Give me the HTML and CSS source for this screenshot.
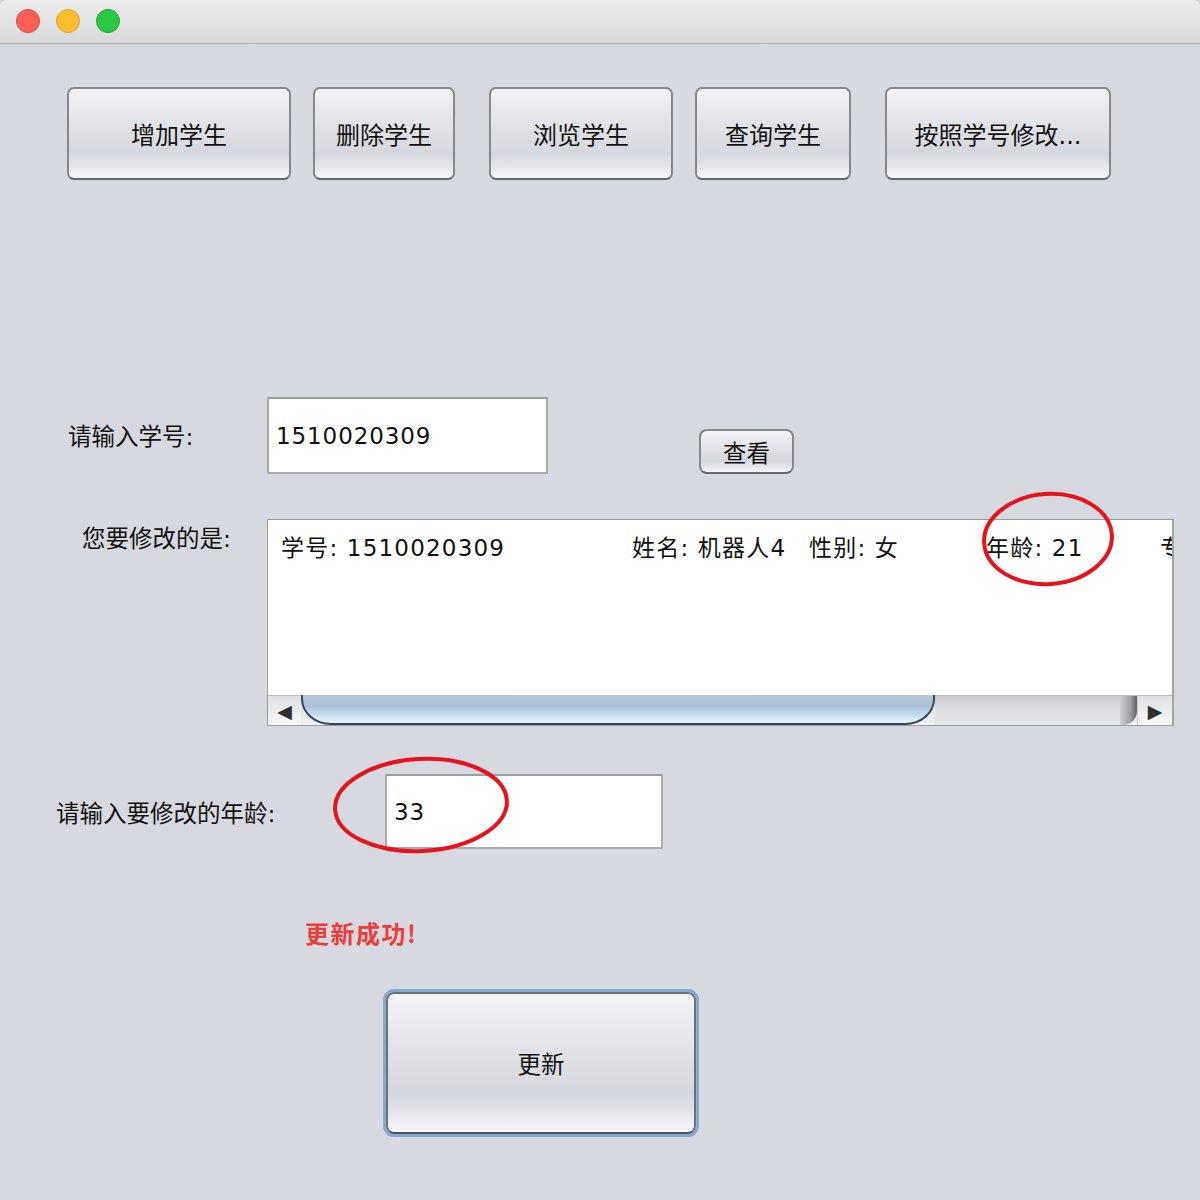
FILE: index.html
```html
<!DOCTYPE html>
<html lang="zh">
<head>
<meta charset="utf-8">
<title>学生管理</title>
<link rel="stylesheet" href="styles.css">
</head>
<body>
<div class="window">
  <div class="titlebar">
    <span class="light red"></span>
    <span class="light yellow"></span>
    <span class="light green"></span>
  </div>

  <div class="toolbar">
    <button class="btn b1">增加学生</button>
    <button class="btn b2">删除学生</button>
    <button class="btn b3 wide-gap">浏览学生</button>
    <button class="btn b4">查询学生</button>
    <button class="btn b5 wide-gap">按照学号修改...</button>
  </div>

  <div class="row row-id">
    <div class="label label-id">请输入学号:</div>
    <div class="field field-id">1510020309</div>
    <button class="btn small">查看</button>
  </div>

  <div class="row row-view">
    <div class="label label-view">您要修改的是:</div>
    <div class="textarea">
      <div class="ta-content">
        <span class="cell c1">学号: 1510020309</span><span class="cell c2">姓名: 机器人4</span><span class="cell c3">性别: 女</span><span class="cell c4">年龄: 21</span><span class="cell c5">专业</span>
      </div>
      <div class="hscroll">
        <div class="arrow-left">◀</div>
        <div class="thumb"></div>
        <div class="track-rest"></div>
        <div class="end-shade"></div>
        <div class="arrow-right">▶</div>
      </div>
    </div>
  </div>

  <div class="row row-age">
    <div class="label label-age">请输入要修改的年龄:</div>
    <div class="field field-age">33</div>
  </div>

  <div class="message">更新成功!</div>

  <button class="btn big">更新</button>

  <svg class="marks" width="1200" height="1200" viewBox="0 0 1200 1200">
    <ellipse cx="1048" cy="539" rx="64" ry="45" transform="rotate(-4 1048 539)" fill="none" stroke="#e8121c" stroke-width="4"/>
    <ellipse cx="421" cy="805" rx="86" ry="46" transform="rotate(-3 421 805)" fill="none" stroke="#e8121c" stroke-width="4"/>
  </svg>
</div>
</body>
</html>
```

FILE: styles.css
```css
* { box-sizing: border-box; }

html, body {
  margin: 0;
  padding: 0;
}

body {
  width: 1200px;
  height: 1200px;
  overflow: hidden;
  background: #d7d9e0;
  font-family: "DejaVu Sans", "Noto Sans CJK SC", sans-serif;
  color: #111;
}

.window {
  position: relative;
  width: 1200px;
  height: 1200px;
}

.titlebar {
  height: 44px;
  display: flex;
  align-items: center;
  gap: 16px;
  padding-left: 16px;
  padding-bottom: 1px;
  background: linear-gradient(#ececec, #d9d9d9);
  border-bottom: 1px solid #b4b4b6;
  border-radius: 6px 6px 0 0;
}

.light {
  width: 24px;
  height: 24px;
  border-radius: 50%;
  display: block;
}
.red { background: #fd5f57; border: 1px solid #e2463f; }
.yellow { background: #febc2e; border: 1px solid #e0a028; }
.green { background: #28c840; border: 1px solid #1fa633; }

.btn {
  font-family: "DejaVu Sans", "Noto Sans CJK SC", sans-serif;
  font-size: 24px;
  color: #111;
  border: 2px solid #85878d;
  border-bottom-color: #66686e;
  border-radius: 7px;
  background: linear-gradient(#f3f3f6 0%, #e2e3e8 40%, #d5d7de 72%, #e8eaf0 90%, #f7f8fc 100%);
  padding: 0;
  display: flex;
  align-items: center;
  justify-content: center;
  white-space: nowrap;
}

.toolbar {
  display: flex;
  margin-top: 43px;
  padding-left: 67px;
  gap: 22px;
}
.toolbar .btn { height: 93px; }
.b1 { width: 224px; }
.b2 { width: 142px; }
.b3 { width: 184px; }
.b4 { width: 156px; }
.b5 { width: 226px; }
.wide-gap { margin-left: 12px; }

.row {
  display: flex;
  align-items: flex-start;
}

.label {
  font-size: 23.5px;
  display: flex;
  align-items: center;
  white-space: nowrap;
}

.field {
  background: #fff;
  border: 2px solid #a9aaae;
  border-top-color: #9c9da1;
  font-size: 23px;
  letter-spacing: 0.9px;
  display: flex;
  align-items: center;
  padding-left: 7px;
}

.row-id { margin-top: 217px; }
.label-id { width: 267px; height: 76px; padding-left: 68px; }
.field-id { width: 281px; height: 77px; }
.btn.small {
  width: 95px;
  height: 45px;
  margin-left: 151px;
  margin-top: 32px;
  font-size: 23.5px;
  border-radius: 8px;
}

.row-view { margin-top: 45px; }
.label-view {
  width: 267px;
  padding-left: 82px;
  padding-top: 4px;
  line-height: 32px;
}

.textarea {
  width: 907px;
  height: 207px;
  border: 1px solid #9a9ca2;
  border-right: 2px solid #a0a2a8;
  background: #fff;
  display: flex;
  flex-direction: column;
  overflow: hidden;
}

.ta-content {
  flex: 1;
  padding-top: 13px;
  padding-left: 13px;
  white-space: nowrap;
  overflow: hidden;
  font-size: 23px;
  line-height: 30px;
  letter-spacing: 1.2px;
}
.cell { display: inline-block; }
.c1 { width: 351px; }
.c2 { width: 177px; }
.c3 { width: 177px; }
.c4 { width: 174px; }

.hscroll {
  height: 30px;
  display: flex;
  border-top: 1px solid #b9bcc2;
  background: linear-gradient(#cfd1d5, #e4e5e8 40%, #f1f2f4);
}

.arrow-left, .arrow-right {
  width: 33px;
  font-size: 19px;
  color: #2e2e2e;
  display: flex;
  align-items: center;
  justify-content: center;
  background: linear-gradient(#dfe0e3, #eeeff1 60%, #f7f7f8);
}
.arrow-right { width: 35px; border-left: 1px solid #c9cacd; }

.thumb {
  width: 634px;
  margin-top: -1px;
  border: 2px solid #34475b;
  border-top: none;
  border-radius: 0 0 30px 30px / 0 0 26px 26px;
  background: linear-gradient(#b7c6d7 0%, #abc1d8 40%, #c7dcec 70%, #eaf7fe 100%);
}

.track-rest {
  flex: 1;
  background: linear-gradient(#c6c8cc, #dcdde0 40%, #e6e7ea);
}

.end-shade {
  width: 17px;
  background: linear-gradient(90deg, #cfd0d4, #9fa1a6 60%, #5d6066);
  border-radius: 0 0 14px 0;
}

.row-age { margin-top: 48px; }
.label-age { width: 385px; height: 75px; padding-left: 56px; }
.field-age { width: 278px; height: 75px; }

.message {
  margin-top: 71px;
  padding-left: 305px;
  font-size: 24px;
  line-height: 26px;
  letter-spacing: 1.5px;
  font-weight: bold;
  color: #ee3b3b;
  font-family: "Noto Sans CJK SC", sans-serif;
}

.btn.big {
  width: 310px;
  height: 142px;
  margin-top: 46px;
  margin-left: 386px;
  border: 2px solid #6d7076;
  border-bottom-color: #505257;
  outline: 3px solid #86a9d0;
  border-radius: 8px;
  font-size: 23.5px;
}

.marks {
  position: absolute;
  left: 0;
  top: 0;
  pointer-events: none;
}
```
